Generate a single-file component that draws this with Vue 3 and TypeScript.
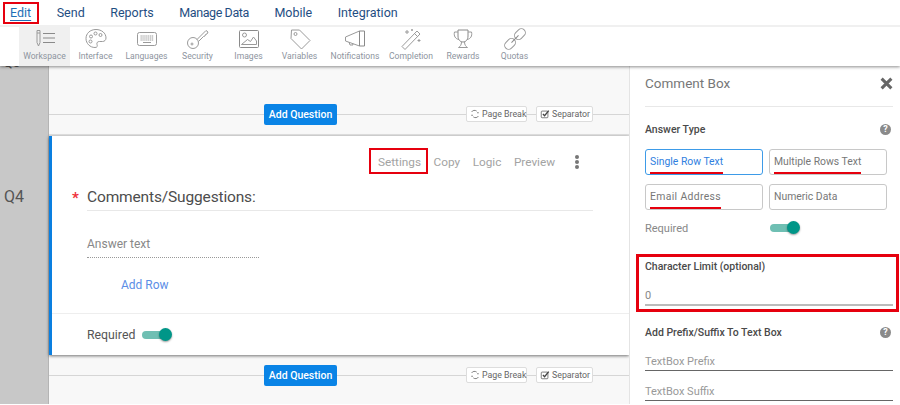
<script setup lang="ts">
const nav: string[] = ['Edit', 'Send', 'Reports', 'Manage Data', 'Mobile', 'Integration']
</script>

<template>
  <div class="page">
    <header class="top">
      <nav class="nav">
        <a v-for="(n, i) in nav" :key="n" class="nav-item" :class="{ on: i === 0 }">{{ n }}</a>
      </nav>
      <div class="tools">
        <div class="tool active">
          <svg viewBox="0 0 24 24" class="ico"><path d="M4 3.500h3v12l-1.500 3.500L4 15.500zM4 6h3" /><path d="M10 6.500h12M10 11h12M10 15.500h12" class="dark" /></svg>
          <span>Workspace</span>
        </div>
        <div class="tool">
          <svg viewBox="0 0 24 24" class="ico"><path d="M12 2.500C6 2.500 2 6.500 2 11.500c0 5 4 9 9 9 2.500 0 2.500-1.500 2-3-.5-1.800.5-3 2.500-3h3c2 0 3.500-1.500 3.500-3.500 0-5-4.500-8.500-10-8.500z" /><circle cx="7" cy="9.500" r="1.500" /><circle cx="11.500" cy="6.500" r="1.500" /><circle cx="16.500" cy="8" r="1.500" /><circle cx="6.500" cy="14.500" r="1.500" /></svg>
          <span>Interface</span>
        </div>
        <div class="tool">
          <svg viewBox="0 0 24 24" class="ico"><rect x="2.500" y="5.500" width="19" height="13" rx="2" /><path d="M5.500 9h13M5.500 11h13M5.500 13h13" stroke-dasharray="1.300 .6" /><path d="M8 15.500h8" /></svg>
          <span>Languages</span>
        </div>
        <div class="tool">
          <svg viewBox="0 0 24 24" class="ico"><circle cx="7" cy="16" r="5.500" /><circle cx="6" cy="17" r="1" /><path d="M11 12.500l9-9 2 1.500-1 2-1.500.5-.5 1.500-1.500.5-5 5" /></svg>
          <span>Security</span>
        </div>
        <div class="tool">
          <svg viewBox="0 0 24 24" class="ico"><rect x="2.500" y="3.500" width="19" height="17" rx="1" class="dark" /><circle cx="7.500" cy="8" r="2" /><path d="M4.500 17.500l6-5 3 2 3-4.500 3 4v3.500z" /></svg>
          <span>Images</span>
        </div>
        <div class="tool">
          <svg viewBox="0 0 24 24" class="ico"><path d="M3.500 3h8L22 13.500 13.500 22 3 11.500z" /><circle cx="7.500" cy="7" r="1.500" /></svg>
          <span>Variables</span>
        </div>
        <div class="tool wide">
          <svg viewBox="0 0 24 24" class="ico"><path d="M2.500 10l14-6v15l-14-5z" /><path d="M16.500 4h5v15h-5z" class="dark" /><path d="M6 15l1 3h3l-.5-2" /></svg>
          <span>Notifications</span>
        </div>
        <div class="tool mid">
          <svg viewBox="0 0 24 24" class="ico"><path d="M3 19.500L18 4l3 3L6 22.500z" /><path d="M15.500 6.500l3 3" /><path d="M8 3v4M6 5h4M13 2v2M12 3h2M20 12v3M18.500 13.500h3" /></svg>
          <span>Completion</span>
        </div>
        <div class="tool mid">
          <svg viewBox="0 0 24 24" class="ico"><path d="M7 3h10v6c0 3.500-2 6-5 6s-5-2.500-5-6z" class="dark" /><path d="M7 5H3.500c-1 4 1 7 4.500 7.500M17 5h3.500c1 4-1 7-4.500 7.500" /><path d="M10.500 15c0 3-1.500 4.500-3 5.500h9c-1.500-1-3-2.500-3-5.500" /></svg>
          <span>Rewards</span>
        </div>
        <div class="tool">
          <svg viewBox="0 0 24 24" class="ico"><g transform="rotate(45 12 12)"><rect x="8" y="-1" width="8" height="12" rx="4" /><rect x="8" y="13" width="8" height="12" rx="4" /><path d="M12 7v10" class="dark" /></g></svg>
          <span>Quotas</span>
        </div>
      </div>
    </header>

    <main class="body">
      <div class="canvas">
        <div class="row first">
          <div class="gutter"><span class="q3">Q3</span></div>
          <div class="gap-zone top-zone">
            <div class="adder">
              <button class="add">Add Question</button>
              <div class="chips">
                <span class="chip c1">
                  <svg viewBox="0 0 12 12" class="chip-ico"><path d="M2 3.500C3 1.500 6 1 8 2.500M10 8.500C9 10.500 6 11 4 9.500M1.500 7.500h2M8.500 4.500h2" /></svg>
                  Page Break
                </span>
                <span class="chip c2">
                  <svg viewBox="0 0 12 12" class="chip-ico"><rect x="1.500" y="2.500" width="8" height="8" rx="1" /><path d="M3.500 6l2 2 5-6" class="thick" /></svg>
                  Separator
                </span>
              </div>
            </div>
          </div>
        </div>

        <div class="row">
          <div class="gutter q-label">Q4</div>
          <section class="card">
            <div class="actions">
              <a>Settings</a><a>Copy</a><a>Logic</a><a>Preview</a>
              <span class="kebab"><i></i><i></i><i></i></span>
            </div>
            <div class="title-row">
              <span class="star">*</span>
              <h2>Comments/Suggestions:</h2>
            </div>
            <div class="answer">Answer text</div>
            <a class="add-row">Add Row</a>
            <div class="req">
              <span>Required</span>
              <span class="toggle"><b></b></span>
            </div>
          </section>
        </div>

        <div class="row">
          <div class="gutter"></div>
          <div class="gap-zone">
            <div class="adder">
              <button class="add">Add Question</button>
              <div class="chips">
                <span class="chip c1">
                  <svg viewBox="0 0 12 12" class="chip-ico"><path d="M2 3.500C3 1.500 6 1 8 2.500M10 8.500C9 10.500 6 11 4 9.500M1.500 7.500h2M8.500 4.500h2" /></svg>
                  Page Break
                </span>
                <span class="chip c2">
                  <svg viewBox="0 0 12 12" class="chip-ico"><rect x="1.500" y="2.500" width="8" height="8" rx="1" /><path d="M3.500 6l2 2 5-6" class="thick" /></svg>
                  Separator
                </span>
              </div>
            </div>
          </div>
        </div>
      </div>

      <aside class="side">
        <div class="side-head">
          <h3>Comment Box</h3>
          <svg viewBox="0 0 12 12" class="close"><path d="M1.500 1.500l9 9M10.500 1.500l-9 9" /></svg>
        </div>
        <div class="label-row first-label">
          <strong>Answer Type</strong><span class="help">?</span>
        </div>
        <div class="types">
          <div class="type sel"><span class="u">Single Row Text</span></div>
          <div class="type"><span class="u">Multiple Rows Text</span></div>
          <div class="type"><span class="u email">Email Address</span></div>
          <div class="type">Numeric Data</div>
        </div>
        <div class="side-req">
          <span class="req-label">Required</span>
          <span class="toggle"><b></b></span>
        </div>
        <div class="limit">
          <strong>Character Limit (optional)</strong>
          <div class="limit-input">0</div>
        </div>
        <div class="label-row prefix-label">
          <strong>Add Prefix/Suffix To Text Box</strong><span class="help">?</span>
        </div>
        <div class="line-input">TextBox Prefix</div>
        <div class="line-input">TextBox Suffix</div>
      </aside>
    </main>

    <div class="mark mark-edit"></div>
    <div class="mark mark-settings"></div>
  </div>
</template>

<style>
html, body { margin: 0; padding: 0; background: #fff; overflow: hidden; }
</style>

<style scoped>
.page {
  position: relative;
  width: 900px;
  height: 405px;
  overflow: hidden;
  font-family: "Roboto", "Lato", sans-serif;
  color: #555;
  background: #fff;
}
.top {
  position: relative;
  z-index: 5;
  background: #fff;
  box-shadow: 0 1px 3px rgba(0, 0, 0, .45);
}
.nav {
  display: flex;
  height: 25px;
  align-items: center;
  padding-left: 10px;
  gap: 25.500px;
  border-bottom: 2px solid #f0f0f0;
  box-sizing: content-box;
}
.nav-item {
  font-size: 12.500px;
  color: #1f4e82;
}
.nav-item:nth-child(4) {
  letter-spacing: -.4px;
  word-spacing: 0;
}
.nav-item.on {
  color: #1f6fb5;
  text-decoration: underline;
  text-underline-offset: 3px;
}
.tools {
  display: flex;
  height: 39px;
  padding-left: 19px;
}
.tool {
  width: 51px;
  display: flex;
  flex-direction: column;
  align-items: center;
  font-size: 8.600px;
  color: #8d949e;
  white-space: nowrap;
  box-sizing: border-box;
}
.tool.wide { width: 60px; }
.tool.mid { width: 52px; }
.tool.active { background: #f0f0f0; }
.tool span { line-height: 11px; }
.ico {
  width: 24px;
  height: 24px;
  fill: none;
  stroke: #9a9a9a;
  stroke-width: 1;
  flex: none;
}
.ico .dark { stroke: #8a8a8a; }

.body {
  display: flex;
  height: 338px;
}
.canvas {
  width: 629px;
  flex: none;
  display: flex;
  flex-direction: column;
  overflow: hidden;
  background: #f8f8f8;
}
.row {
  display: flex;
}
.row:last-child { flex: 1; }
.first { height: 70px; }
.gutter {
  width: 49px;
  flex: none;
  background: #c8c8c8;
  border-right: 1px solid #b4b4b4;
  color: #555;
  font-size: 16px;
  box-sizing: border-box;
}
.q3 {
  display: block;
  padding-left: 3px;
  margin-top: -10px;
  font-size: 14px;
  line-height: 13px;
}
.q-label {
  padding: 51px 0 0 4px;
}
.gap-zone {
  flex: 1;
  position: relative;
  min-width: 0;
  border-bottom: 2px solid #e2e2e2;
  box-sizing: border-box;
}
.gap-zone:not(.top-zone) { border-bottom: 0; }
.adder {
  position: absolute;
  left: 0;
  right: 0;
  top: 37px;
  display: flex;
  height: 22px;
  align-items: center;
  padding-left: 215px;
}
.gap-zone:not(.top-zone) .adder { top: 9px; }
.adder::before {
  content: "";
  position: absolute;
  left: 0;
  right: 0;
  top: 11px;
  border-top: 1px solid #d6d6d6;
}
.add {
  position: relative;
  width: 73px;
  height: 21px;
  background: #0a84e6;
  color: #fff;
  border: 0;
  border-radius: 2px;
  font: 500 10.500px "Roboto", sans-serif;
  padding: 0;
}
.chips {
  position: absolute;
  left: 417px;
  top: 3px;
  display: flex;
  gap: 9px;
}
.chip {
  height: 16px;
  display: inline-flex;
  align-items: center;
  gap: 2px;
  background: #fff;
  border: 1px solid #ddd;
  border-radius: 2px;
  padding: 0 3px;
  font-size: 8.800px;
  color: #666;
  box-sizing: border-box;
  white-space: nowrap;
}
.c1 { width: 61px; }
.c2 { width: 57px; }
.chip-ico {
  width: 10px;
  height: 10px;
  flex: none;
  fill: none;
  stroke: #666;
  stroke-width: 1;
}
.chip-ico .thick { stroke-width: 1.600; stroke: #444; }

.card {
  flex: 1;
  min-width: 0;
  height: 219px;
  box-sizing: border-box;
  background: #fff;
  border-left: 3px solid #0a7fe0;
  box-shadow: 0 1px 3px rgba(0, 0, 0, .55);
  position: relative;
  z-index: 1;
  display: flex;
  flex-direction: column;
}
.actions {
  display: flex;
  align-items: center;
  padding: 17px 0 0 326px;
  height: 18px;
  gap: 12.500px;
  font-size: 11.800px;
  color: #a3a3a3;
  box-sizing: content-box;
}
.kebab {
  display: flex;
  flex-direction: column;
  gap: 1px;
  margin-left: 7px;
}
.kebab i {
  width: 4px;
  height: 4px;
  border-radius: 50%;
  background: #777;
}
.title-row {
  margin: 13px 35px 0 20px;
  display: flex;
  align-items: center;
  height: 26px;
}
.star {
  width: 15px;
  font-size: 15px;
  color: #f0303a;
  line-height: 1;
  font-weight: 700;
  padding-top: 2px;
}
.title-row h2 {
  flex: 1;
  margin: 0;
  font-size: 15.500px;
  letter-spacing: -.15px;
  font-weight: 400;
  color: #4d4d4d;
}
.answer {
  margin: 0 0 0 35px;
  width: 172px;
  padding-top: 24px;
  height: 23px;
  line-height: 20px;
  font-size: 12px;
  color: #888;
  border-bottom: 1px dotted #999;
  box-sizing: content-box;
  position: relative;
}
.answer::before {
  content: "";
  position: absolute;
  left: 0;
  top: 0;
  width: 506px;
  border-top: 1px solid #e8e8e8;
}
.add-row {
  margin: 17px 0 0 69px;
  font-size: 12px;
  color: #5b8ee6;
  line-height: 20px;
}
.req {
  margin-top: 18px;
  padding: 0 0 0 35px;
  flex: 1;
  display: flex;
  align-items: center;
  gap: 7px;
  border-top: 1px solid #eee;
  font-size: 12.300px;
  color: #555;
}
.toggle {
  position: relative;
  display: inline-block;
  width: 26px;
  height: 8px;
  background: #6fbfb3;
  border-radius: 4px;
}
.toggle b {
  position: absolute;
  right: -4px;
  top: -3px;
  width: 13px;
  height: 13px;
  border-radius: 50%;
  background: #009688;
  box-shadow: 0 1px 2px rgba(0, 0, 0, .4);
}

.side {
  flex: 1;
  position: relative;
  z-index: 2;
  background: #fff;
  border-left: 1px solid #e4e4e4;
  padding: 0 7px 0 15px;
  box-sizing: border-box;
  min-width: 0;
}
.side-head {
  height: 40px;
  display: flex;
  align-items: center;
  justify-content: space-between;
  border-bottom: 1px solid #e8e8e8;
}
.side-head h3 {
  margin: 0 0 6px;
  font-size: 13.500px;
  font-weight: 400;
  color: #777;
}
.close {
  width: 13px;
  height: 13px;
  fill: none;
  stroke: #666;
  stroke-width: 2.800;
  margin: 0 0 6px 0;
}
.label-row {
  display: flex;
  justify-content: space-between;
  align-items: center;
  height: 16px;
  padding-right: 2px;
}
.first-label { margin-top: 14px; }
strong {
  font-size: 10.500px;
  font-weight: 500;
  color: #4a4a4a;
}
.help {
  width: 11px;
  height: 11px;
  border-radius: 50%;
  background: #8a8a8a;
  color: #fff;
  font-size: 9px;
  font-weight: 700;
  line-height: 11px;
  text-align: center;
}
.types {
  display: grid;
  grid-template-columns: 118px 118px;
  column-gap: 6px;
  row-gap: 9px;
  margin-top: 12px;
}
.type {
  height: 26px;
  box-sizing: border-box;
  border: 1px solid #c8c8c8;
  border-radius: 3px;
  padding: 0 4px;
  font-size: 10.400px;
  line-height: 23px;
  color: #777;
  white-space: nowrap;
}
.type.sel {
  border-color: #3d9be8;
  color: #2f80e0;
}
.u { position: relative; display: inline-block; }
.u.email { letter-spacing: .35px; }
.u::after {
  content: "";
  position: absolute;
  left: 0;
  right: 0;
  bottom: -1px;
  height: 2px;
  background: #e6000e;
}
.side-req {
  display: flex;
  align-items: center;
  margin-top: 9px;
  height: 18px;
  font-size: 11px;
  color: #888;
}
.req-label { width: 125px; }
.limit {
  margin: 17px -6px 0 -9px;
  height: 58px;
  box-sizing: border-box;
  border: 3px solid #e6000e;
  padding: 2px 3px 0 6px;
}
.limit strong { line-height: 16px; display: block; }
.limit-input {
  margin-top: 13px;
  height: 16px;
  line-height: 16px;
  font-size: 11px;
  color: #888;
  border-bottom: 2px solid #bbb;
  box-sizing: content-box;
}
.prefix-label { margin-top: 12px; }
.line-input {
  margin-top: 10px;
  padding-top: 3px;
  height: 17px;
  line-height: 17px;
  font-size: 11px;
  color: #999;
  border-bottom: 1px solid #666;
  box-sizing: content-box;
}
.line-input + .line-input { margin-top: 9px; }
.mark {
  position: absolute;
  z-index: 9;
  border: 2px solid #e6000e;
  box-sizing: border-box;
  pointer-events: none;
}
.mark-edit { left: 3px; top: 2px; width: 36px; height: 22px; }
.mark-settings { left: 369px; top: 148px; width: 59px; height: 26px; }
</style>
